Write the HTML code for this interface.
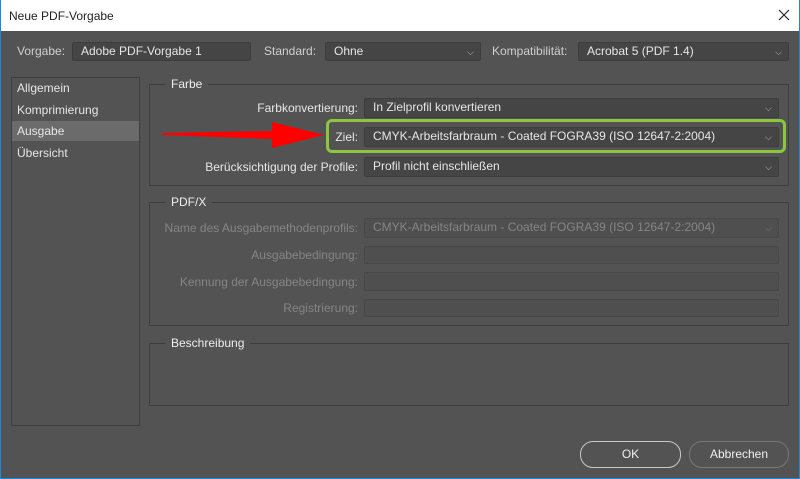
<!DOCTYPE html>
<html><head><meta charset="utf-8"><style>
*{margin:0;padding:0;box-sizing:border-box}
body{width:800px;height:479px;overflow:hidden;background:#535353;font-family:"Liberation Sans","DejaVu Sans",sans-serif;font-size:12px;color:#e6e6e6;position:relative}
.a{position:absolute;white-space:nowrap}
.win{position:absolute;left:0;top:0;width:800px;height:479px;border:1px solid #1c86d8;border-top:none}
.title{position:absolute;left:1px;top:0;width:798px;height:31px;background:#fff;color:#222;font-size:12px}
.fld{position:absolute;background:#454545;border:1px solid #3d3d3d;border-radius:2px;color:#e6e6e6;padding-left:8px;line-height:17px}
.fld.dis{background:#4f4f4f;border-color:#484848;color:#858585}
.chev{position:absolute;right:6px;top:1px;font-size:9px;color:#bbb}
.lbl{position:absolute;text-align:right;white-space:nowrap}
.grp{position:absolute;border:1px solid #3e3e3e}
.gl{position:absolute;background:#535353;padding:0 6px;color:#eee;top:-9px;left:15px;line-height:16px}
.dl{color:#858585}
.btn{position:absolute;border:1px solid #c8c8c8;border-radius:13px;text-align:center;line-height:24px;color:#eee}
</style></head><body>
<div class="title"><span class="a" style="left:8px;top:9px">Neue PDF-Vorgabe</span>
<svg class="a" style="left:777px;top:9px" width="12" height="12"><path d="M1 1L11 11M11 1L1 11" stroke="#222" stroke-width="1.2"/></svg></div>
<div class="win"></div>

<span class="a" style="left:17px;top:44px;color:#cfcfcf">Vorgabe:</span>
<div class="fld" style="left:72px;top:42px;width:179px;height:19px">Adobe PDF-Vorgabe 1</div>
<span class="a" style="left:264px;top:44px;color:#cfcfcf">Standard:</span>
<div class="fld" style="left:325px;top:42px;width:156px;height:19px">Ohne<span class="chev">&#x2335;</span></div>
<span class="a" style="left:492px;top:44px;color:#cfcfcf">Kompatibilität:</span>
<div class="fld" style="left:578px;top:42px;width:211px;height:19px">Acrobat 5 (PDF 1.4)<span class="chev">&#x2335;</span></div>

<div class="a" style="left:11px;top:77px;width:129px;height:349px;border:1px solid #3e3e3e"></div>
<div class="a" style="left:12px;top:121px;width:127px;height:20px;background:#6b6b6b"></div>
<span class="a" style="left:17px;top:81px">Allgemein</span>
<span class="a" style="left:17px;top:103px">Komprimierung</span>
<span class="a" style="left:17px;top:124px">Ausgabe</span>
<span class="a" style="left:17px;top:146px">Übersicht</span>

<div class="grp" style="left:149px;top:84px;width:640px;height:102px"><span class="gl">Farbe</span></div>
<div class="lbl" style="right:442px;top:101px">Farbkonvertierung:</div>
<div class="fld" style="left:364px;top:98px;width:415px;height:20px">In Zielprofil konvertieren<span class="chev">&#x2335;</span></div>
<div class="a" style="left:326px;top:119px;width:460px;height:34px;border:3px solid #8cc63f;border-radius:6px"></div>
<div class="lbl" style="right:442px;top:130px">Ziel:</div>
<div class="fld" style="left:364px;top:127px;width:415px;height:20px">CMYK-Arbeitsfarbraum - Coated FOGRA39 (ISO 12647-2:2004)<span class="chev">&#x2335;</span></div>
<div class="lbl" style="right:442px;top:160px">Berücksichtigung der Profile:</div>
<div class="fld" style="left:364px;top:157px;width:415px;height:20px">Profil nicht einschließen<span class="chev">&#x2335;</span></div>
<svg class="a" style="left:160px;top:120px" width="166" height="30"><polygon points="2,13 112,11 112,2 164,15 112,28 112,19 2,15" fill="#f00"/></svg>

<div class="grp" style="left:149px;top:202px;width:640px;height:124px"><span class="gl">PDF/X</span></div>
<div class="lbl dl" style="right:442px;top:221px">Name des Ausgabemethodenprofils:</div>
<div class="fld dis" style="left:364px;top:218px;width:415px;height:20px">CMYK-Arbeitsfarbraum - Coated FOGRA39 (ISO 12647-2:2004)<span class="chev" style="color:#777">&#x2335;</span></div>
<div class="lbl dl" style="right:442px;top:248px">Ausgabebedingung:</div>
<div class="fld dis" style="left:364px;top:246px;width:415px;height:18px"></div>
<div class="lbl dl" style="right:442px;top:275px">Kennung der Ausgabebedingung:</div>
<div class="fld dis" style="left:364px;top:272px;width:415px;height:19px"></div>
<div class="lbl dl" style="right:442px;top:301px">Registrierung:</div>
<div class="fld dis" style="left:364px;top:299px;width:415px;height:18px"></div>

<div class="grp" style="left:149px;top:343px;width:640px;height:63px"><span class="gl">Beschreibung</span></div>

<div class="btn" style="left:580px;top:441px;width:101px;height:27px">OK</div>
<div class="btn" style="left:689px;top:441px;width:100px;height:27px;border-color:#777">Abbrechen</div>
</body></html>
